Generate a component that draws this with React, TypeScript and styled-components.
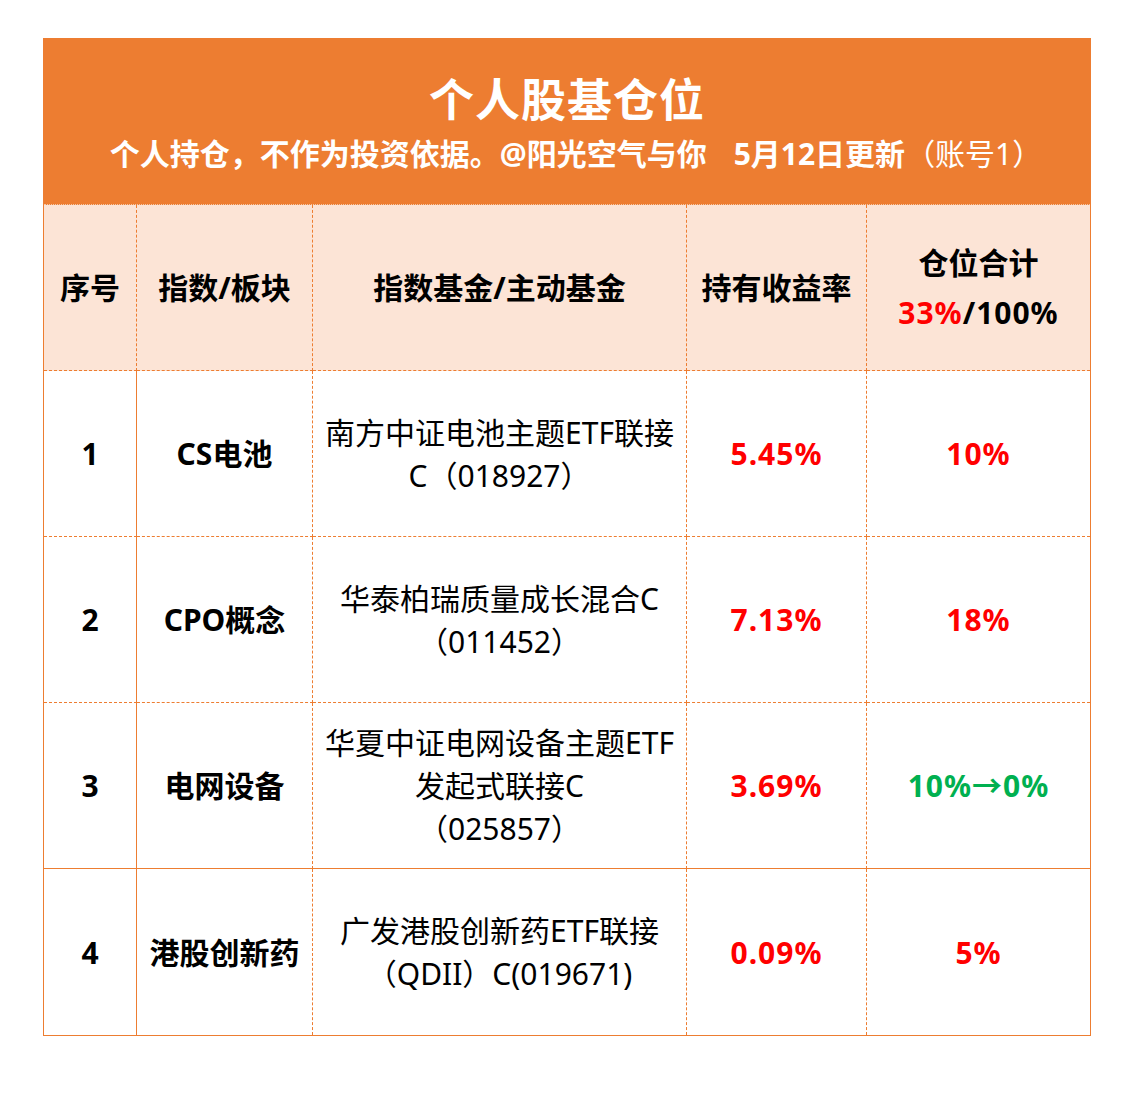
import React from "react";
import styled, { createGlobalStyle } from "styled-components";

const ORANGE = "#ED7D31";
const PEACH = "#FCE4D6";
const RED = "#FF0000";
const GREEN = "#00B050";

type Line = "solid" | "dashed" | "dotted" | "none";

const GlobalStyle = createGlobalStyle`
  html, body {
    margin: 0;
    padding: 0;
    background: #fff;
  }
  body {
    font-family: "Noto Sans", "Noto Sans CJK SC", sans-serif;
    color: #000;
  }
`;

const Page = styled.div`
  padding: 38px 0 0 43px;
`;

const Sheet = styled.div`
  display: grid;
  grid-template-columns: 93px 176px 374px 180px 223px;
  grid-auto-rows: 166px;
  width: max-content;
  border: 1px solid ${ORANGE};
`;

const Banner = styled.div`
  grid-column: 1 / -1;
  box-sizing: border-box;
  background: ${ORANGE};
  border-bottom: 1px dotted #f6c7a6;
  display: flex;
  flex-direction: column;
  align-items: center;
  padding-top: 34px;
  color: #fff;
`;

const Title = styled.h1`
  margin: 0;
  font-size: 45px;
  line-height: 54px;
  font-weight: 700;
  letter-spacing: 1px;
`;

const Subtitle = styled.div`
  margin: 8px 0 0 18px;
  font-size: 30px;
  line-height: 38px;
  font-weight: 700;
  white-space: nowrap;
`;

const Gap = styled.span`
  margin-left: 27px;
`;

const Light = styled.span`
  font-weight: 400;
`;

const Cell = styled.div<{ $right: Line; $bottom: Line; $head?: boolean }>`
  box-sizing: border-box;
  display: flex;
  flex-direction: column;
  align-items: center;
  justify-content: center;
  text-align: center;
  background: ${({ $head }) => ($head ? PEACH : "#fff")};
  border-right: ${({ $right }) => ($right === "none" ? "none" : `1px ${$right} ${ORANGE}`)};
  border-bottom: ${({ $bottom }) => ($bottom === "none" ? "none" : `1px ${$bottom} ${ORANGE}`)};
  font-size: 30px;
  line-height: 43px;
`;

const HeadText = styled.div<{ $spaced?: boolean }>`
  font-weight: 700;
  line-height: 50px;
  letter-spacing: ${({ $spaced }) => ($spaced ? "1px" : "0")};
`;

const Bold = styled.div<{ $color?: string; $spaced?: boolean }>`
  font-weight: 700;
  color: ${({ $color }) => $color ?? "#000"};
  letter-spacing: ${({ $spaced }) => ($spaced ? "1px" : "0")};
`;

const Fund = styled.div`
  font-weight: 400;
  white-space: nowrap;
`;

const Red = styled.span`
  color: ${RED};
`;

type Row = {
  no: string;
  sector: string;
  fund: string[];
  gain: string;
  weight: string;
  weightColor: string;
};

const rows: Row[] = [
  {
    no: "1",
    sector: "CS电池",
    fund: ["南方中证电池主题ETF联接", "C（018927）"],
    gain: "5.45%",
    weight: "10%",
    weightColor: RED,
  },
  {
    no: "2",
    sector: "CPO概念",
    fund: ["华泰柏瑞质量成长混合C", "（011452）"],
    gain: "7.13%",
    weight: "18%",
    weightColor: RED,
  },
  {
    no: "3",
    sector: "电网设备",
    fund: ["华夏中证电网设备主题ETF", "发起式联接C", "（025857）"],
    gain: "3.69%",
    weight: "10%→0%",
    weightColor: GREEN,
  },
  {
    no: "4",
    sector: "港股创新药",
    fund: ["广发港股创新药ETF联接", "（QDII）C(019671)"],
    gain: "0.09%",
    weight: "5%",
    weightColor: RED,
  },
];

// row lines: dashed between the first rows, solid above the last one
const bottomLine = (i: number): Line =>
  i === rows.length - 1 ? "none" : i === rows.length - 2 ? "solid" : "dashed";

export default function App() {
  return (
    <Page>
      <GlobalStyle />
      <Sheet>
        <Banner>
          <Title>个人股基仓位</Title>
          <Subtitle>
            个人持仓，不作为投资依据。@阳光空气与你
            <Gap>5月12日更新</Gap>
            <Light>（账号1）</Light>
          </Subtitle>
        </Banner>

        <Cell $head $right="dashed" $bottom="dashed">
          <HeadText>序号</HeadText>
        </Cell>
        <Cell $head $right="dashed" $bottom="dashed">
          <HeadText>指数/板块</HeadText>
        </Cell>
        <Cell $head $right="dashed" $bottom="dashed">
          <HeadText>指数基金/主动基金</HeadText>
        </Cell>
        <Cell $head $right="dashed" $bottom="dashed">
          <HeadText>持有收益率</HeadText>
        </Cell>
        <Cell $head $right="none" $bottom="dashed">
          <HeadText>仓位合计</HeadText>
          <HeadText $spaced>
            <Red>33%</Red>/100%
          </HeadText>
        </Cell>

        {rows.map((r, i) => (
          <React.Fragment key={r.no}>
            <Cell $right="solid" $bottom={bottomLine(i)}>
              <Bold>{r.no}</Bold>
            </Cell>
            <Cell $right="dashed" $bottom={bottomLine(i)}>
              <Bold>{r.sector}</Bold>
            </Cell>
            <Cell $right="dashed" $bottom={bottomLine(i)}>
              {r.fund.map((line) => (
                <Fund key={line}>{line}</Fund>
              ))}
            </Cell>
            <Cell $right="dashed" $bottom={bottomLine(i)}>
              <Bold $color={RED} $spaced>
                {r.gain}
              </Bold>
            </Cell>
            <Cell $right="none" $bottom={bottomLine(i)}>
              <Bold $color={r.weightColor} $spaced>
                {r.weight}
              </Bold>
            </Cell>
          </React.Fragment>
        ))}
      </Sheet>
    </Page>
  );
}
